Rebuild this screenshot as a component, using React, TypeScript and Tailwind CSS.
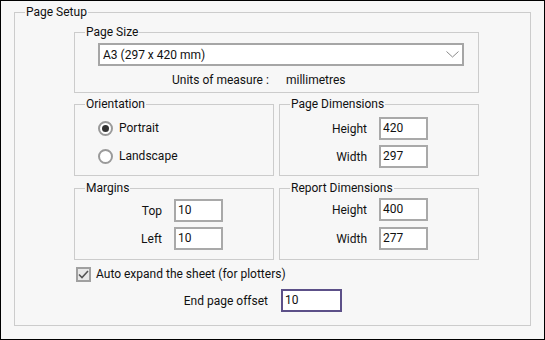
import React from 'react';

const legendCls = 'ml-[10px] px-[1px] leading-[16px]';
const groupCls = 'border border-[#cccccc] p-0 m-0';

function NumField({ value }: { value: string }) {
  return (
    <div className="w-[49px] h-[23px] border-2 border-[#a9a9a9] bg-white pl-[2px] leading-[19px]">
      {value}
    </div>
  );
}

function FieldRow({ label, value, className }: { label: string; value: string; className?: string }) {
  return (
    <div className={`flex items-center gap-[12px] ${className ?? ''}`}>
      <span className="w-[87px] text-right">{label}</span>
      <NumField value={value} />
    </div>
  );
}

function Radio({ label, checked, className }: { label: string; checked?: boolean; className?: string }) {
  return (
    <div className={`flex items-center gap-[6px] h-[16px] ${className ?? ''}`}>
      <span className="w-[15px] h-[15px] rounded-full border-2 border-[#9a9a9a] bg-white flex items-center justify-center">
        {checked && <span className="w-[7px] h-[7px] rounded-full bg-[#333333]" />}
      </span>
      <span>{label}</span>
    </div>
  );
}

export default function App() {
  return (
    <div
      className="w-[545px] h-[340px] border border-black bg-[#f7f7f7] pl-[13px] pt-[3px] text-[12px] text-[#111111]"
      style={{ fontFamily: 'Roboto, sans-serif' }}
    >
      <fieldset className={`${groupCls} w-[517px] h-[322px]`}>
        <legend className={legendCls}>Page Setup</legend>

        {/* Page size */}
        <fieldset className={`${groupCls} ml-[59px] mt-[4px] w-[405px] h-[69px]`}>
          <legend className={legendCls}>Page Size</legend>
          <div className="ml-[23px] mt-[3px] w-[366px] h-[23px] border-2 border-[#a6a6a6] bg-white flex items-center justify-between pl-[3px] pr-[3px]">
            <span>A3 (297 x 420 mm)</span>
            <svg width="13" height="7" viewBox="0 0 13 7" fill="none">
              <path d="M0.5 0.5 L6.5 6 L12.5 0.5" stroke="#8a8a8a" strokeWidth="1" />
            </svg>
          </div>
          <div className="flex mt-[6px] ml-[97px] leading-[16px]">
            <span className="w-[114px]">Units of measure :</span>
            <span>millimetres</span>
          </div>
        </fieldset>

        {/* Orientation / page dimensions */}
        <div className="flex gap-[5px] ml-[59px] mt-[3px]">
          <fieldset className={`${groupCls} w-[200px] h-[80px]`}>
            <legend className={legendCls}>Orientation</legend>
            <Radio label="Portrait" checked className="ml-[23px] mt-[8px]" />
            <Radio label="Landscape" className="ml-[23px] mt-[12px]" />
          </fieldset>
          <fieldset className={`${groupCls} w-[200px] h-[80px]`}>
            <legend className={legendCls}>Page Dimensions</legend>
            <FieldRow label="Height" value="420" className="mt-[5px]" />
            <FieldRow label="Width" value="297" className="mt-[5px]" />
          </fieldset>
        </div>

        {/* Margins / report dimensions */}
        <div className="flex gap-[5px] ml-[59px] mt-[4px]">
          <fieldset className={`${groupCls} w-[200px] h-[80px]`}>
            <legend className={legendCls}>Margins</legend>
            <FieldRow label="Top" value="10" className="mt-[3px]" />
            <FieldRow label="Left" value="10" className="mt-[5px]" />
          </fieldset>
          <fieldset className={`${groupCls} w-[200px] h-[80px]`}>
            <legend className={legendCls}>Report Dimensions</legend>
            <FieldRow label="Height" value="400" className="mt-[2px]" />
            <FieldRow label="Width" value="277" className="mt-[6px]" />
          </fieldset>
        </div>

        {/* Auto expand */}
        <div className="flex items-center gap-[5px] ml-[61px] mt-[6px] h-[16px]">
          <span className="w-[15px] h-[15px] border-2 border-[#a0a0a0] bg-[#e8e8e8] flex items-center justify-center">
            <svg width="11" height="9" viewBox="0 0 11 9" fill="none">
              <path d="M1 4.5 L4 7.5 L10 1" stroke="#555555" strokeWidth="1.6" />
            </svg>
          </span>
          <span>Auto expand the sheet (for plotters)</span>
        </div>

        {/* End page offset */}
        <div className="flex items-center gap-[13px] mt-[7px]">
          <span className="w-[253px] text-right">End page offset</span>
          <div className="w-[61px] h-[23px] border-2 border-[#5c5088] bg-white pl-[2px] leading-[19px]">10</div>
        </div>
      </fieldset>
    </div>
  );
}
